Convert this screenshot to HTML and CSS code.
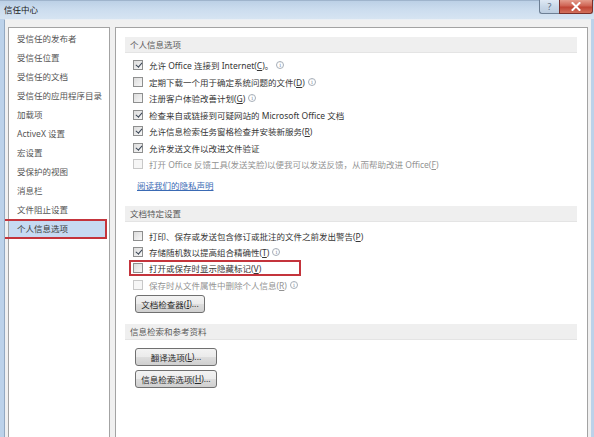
FILE: index.html
```html
<!DOCTYPE html>
<html lang="zh-CN">
<head>
<meta charset="utf-8">
<title>信任中心</title>
<link rel="stylesheet" href="styles.css">
</head>
<body>
<div class="window">
  <div class="titlebar">
    <span class="title">信任中心</span>
    <div class="caption-btns">
      <div class="cap-btn help">?</div>
      <div class="cap-btn close">
        <svg width="10" height="9" viewBox="0 0 10 9"><path d="M1.5 1 L8.5 8 M8.5 1 L1.5 8" stroke="#fff" stroke-width="2" stroke-linecap="square"/></svg>
      </div>
    </div>
  </div>
  <div class="client">
    <nav class="nav">
      <div class="nav-item">受信任的发布者</div>
      <div class="nav-item">受信任位置</div>
      <div class="nav-item">受信任的文档</div>
      <div class="nav-item">受信任的应用程序目录</div>
      <div class="nav-item">加载项</div>
      <div class="nav-item">ActiveX 设置</div>
      <div class="nav-item">宏设置</div>
      <div class="nav-item">受保护的视图</div>
      <div class="nav-item">消息栏</div>
      <div class="nav-item">文件阻止设置</div>
      <div class="nav-item selected marked">个人信息选项</div>
    </nav>
    <main class="pane">
      <div class="section-head">个人信息选项</div>
      <div class="opt-list first">
        <div class="opt"><span class="cb checked"></span><span class="txt">允许 Office 连接到 Internet(<u>C</u>)。</span><span class="info">i</span></div>
        <div class="opt"><span class="cb"></span><span class="txt">定期下载一个用于确定系统问题的文件(<u>D</u>)</span><span class="info">i</span></div>
        <div class="opt"><span class="cb"></span><span class="txt">注册客户体验改善计划(<u>G</u>)</span><span class="info">i</span></div>
        <div class="opt"><span class="cb checked"></span><span class="txt">检查来自或链接到可疑网站的 Microsoft Office 文档</span></div>
        <div class="opt"><span class="cb checked"></span><span class="txt">允许信息检索任务窗格检查并安装新服务(<u>R</u>)</span></div>
        <div class="opt"><span class="cb checked"></span><span class="txt">允许发送文件以改进文件验证</span></div>
        <div class="opt disabled"><span class="cb"></span><span class="txt">打开 Office 反馈工具(发送笑脸)以便我可以发送反馈，从而帮助改进 Office(<u>F</u>)</span></div>
      </div>
      <a class="link" href="#">阅读我们的隐私声明</a>
      <div class="section-head second">文档特定设置</div>
      <div class="opt-list second">
        <div class="opt"><span class="cb"></span><span class="txt">打印、保存或发送包含修订或批注的文件之前发出警告(<u>P</u>)</span></div>
        <div class="opt"><span class="cb checked"></span><span class="txt">存储随机数以提高组合精确性(<u>T</u>)</span><span class="info">i</span></div>
        <div class="opt marked"><span class="cb"></span><span class="txt">打开或保存时显示隐藏标记(<u>V</u>)</span></div>
        <div class="opt disabled"><span class="cb"></span><span class="txt">保存时从文件属性中删除个人信息(<u>R</u>)</span><span class="info">i</span></div>
      </div>
      <div class="btn inspector">文档检查器(<u>I</u>)...</div>
      <div class="section-head third">信息检索和参考资料</div>
      <div class="btn wide translate">翻译选项(<u>L</u>)...</div>
      <div class="btn wide research">信息检索选项(<u>H</u>)...</div>
    </main>
  </div>
</div>
</body>
</html>
```
FILE: styles.css
```css
html, body {
  margin: 0;
  padding: 0;
}
body {
  width: 594px;
  height: 437px;
  overflow: hidden;
  background: #f0f0f0;
  font-family: "Noto Sans", "Noto Sans CJK SC", sans-serif;
  font-size: 8.5px;
  color: #363636;
}
.window {
  width: 594px;
  height: 437px;
  box-sizing: border-box;
  display: flex;
  flex-direction: column;
  border-left: 4px solid #bcd2ea;
  border-right: 3px solid #bcd2ea;
  background: #f0f0f0;
}
.titlebar {
  height: 19px;
  display: flex;
  align-items: flex-start;
  margin-left: -4px;
  margin-right: -3px;
  background: linear-gradient(to bottom, #bcd0e6 0%, #cbdcee 45%, #d6e4f2 100%);
  border-top: 1px solid #9fb4cc;
  box-sizing: border-box;
}
.title {
  padding-left: 4px;
  line-height: 18px;
  color: #1a1a1a;
  font-size: 8.5px;
}
.caption-btns {
  margin-left: auto;
  margin-right: 1px;
  display: flex;
  margin-top: -1px;
}
.cap-btn {
  height: 14px;
  box-sizing: border-box;
  display: flex;
  align-items: center;
  justify-content: center;
  border: 1px solid #6d7f94;
  border-top: none;
}
.cap-btn.help {
  width: 20px;
  border-right: none;
  border-radius: 0 0 0 3px;
  background: linear-gradient(to bottom, #dfe9f4, #c9d8e8 50%, #bccde0);
  color: #5b6d82;
  font-size: 9px;
}
.cap-btn.close {
  width: 34px;
  border-radius: 0 0 3px 0;
  border-color: #7a2f2a;
  background: linear-gradient(to bottom, #e49c8c, #cf6454 45%, #c04535 55%, #d2705c);
}
.client {
  flex: 1;
  display: flex;
  gap: 5px;
  padding: 7px 3px 0 3px;
  border-left: 1px solid #93a9c2;
  border-top: 1px solid #e9eef4;
  overflow: hidden;
}
.nav {
  width: 102px;
  height: 420px;
  flex: none;
  box-sizing: border-box;
  background: #fff;
  border: 1px solid #a3a3a3;
  padding: 1px 4px 0 0;
}
.nav-item {
  height: 19px;
  line-height: 19px;
  padding-left: 8px;
  color: #555;
  white-space: nowrap;
  position: relative;
}
.nav-item.selected {
  background: #c6daf2;
  color: #3a3a3a;
}
.nav-item.marked::after {
  content: "";
  position: absolute;
  left: -6px;
  right: -2px;
  top: 0;
  bottom: -1px;
  border: 2px solid #c4343c;
  pointer-events: none;
}
.pane {
  flex: 1;
  height: 420px;
  box-sizing: border-box;
  background: #fff;
  border: 1px solid #a3a3a3;
  padding: 9px 10px 0 9px;
  display: flex;
  flex-direction: column;
  align-items: flex-start;
}
.section-head {
  align-self: stretch;
  height: 16px;
  line-height: 16px;
  padding-left: 5px;
  background: #efefef;
  border-bottom: 1px solid #e4e4e4;
  box-sizing: border-box;
  color: #5a5a5a;
}
.section-head.second { margin-top: 13px; }
.section-head.third { margin-top: 11px; }
.opt-list {
  display: flex;
  flex-direction: column;
  padding-left: 8px;
}
.opt-list.first { margin-top: 4px; }
.opt-list.second { margin-top: 6px; }
.opt {
  height: 16.5px;
  display: flex;
  align-items: center;
  white-space: nowrap;
  position: relative;
}
.opt-list.second .opt { height: 16.3px; }
.opt .txt { margin-left: 6px; }
.opt u, .btn u { text-decoration: underline; }
.opt.disabled .txt { color: #939393; }
.opt.marked::after {
  content: "";
  position: absolute;
  left: -4px;
  width: 172px;
  top: 0;
  bottom: 0;
  box-sizing: border-box;
  border: 2px solid #c4343c;
}
.cb {
  width: 10px;
  height: 10px;
  box-sizing: border-box;
  border: 1px solid #8e8f8f;
  background: linear-gradient(135deg, #dcdcdc, #f7f7f7);
  position: relative;
  flex: none;
}
.opt.disabled .cb {
  border-color: #c8c8c8;
  background: #f6f6f6;
}
.cb.checked::after {
  content: "";
  position: absolute;
  left: 2.5px;
  top: 0px;
  width: 2.5px;
  height: 5px;
  border-right: 1.5px solid #3a4656;
  border-bottom: 1.5px solid #3a4656;
  transform: rotate(40deg);
}
.info {
  width: 8px;
  height: 8px;
  box-sizing: border-box;
  border: 1px solid #a6aeb8;
  border-radius: 50%;
  color: #8a949f;
  font-size: 6px;
  line-height: 6px;
  text-align: center;
  margin-left: 3px;
  font-family: "DejaVu Serif", serif;
  flex: none;
}
.link {
  margin: 6px 0 0 12px;
  line-height: 14px;
  color: #3a6ab4;
  text-decoration: underline;
}
.btn {
  margin-left: 10px;
  height: 18px;
  width: 70px;
  box-sizing: border-box;
  border: 1px solid #707070;
  border-radius: 3px;
  background: linear-gradient(to bottom, #f3f3f3 0%, #ebebeb 48%, #dddddd 52%, #cfcfcf 100%);
  display: flex;
  align-items: center;
  justify-content: center;
  color: #2a2a2a;
  white-space: nowrap;
}
.btn.inspector { margin-top: 2px; }
.btn.wide { width: 82px; }
.btn.translate { margin-top: 8px; }
.btn.research { margin-top: 4px; }
```
